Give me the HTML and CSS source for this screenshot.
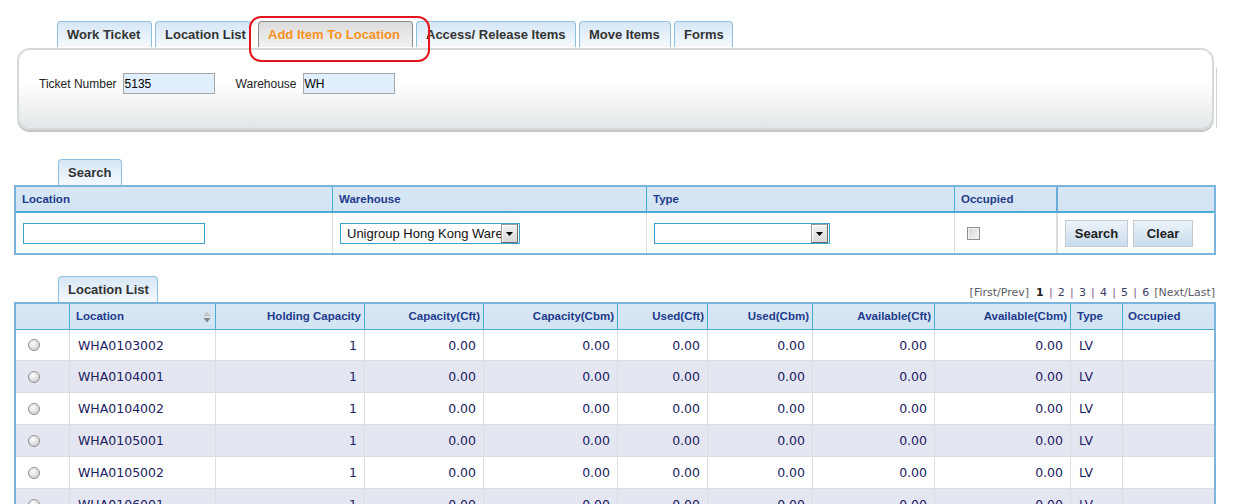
FILE: index.html
```html
<!DOCTYPE html>
<html>
<head>
<meta charset="utf-8">
<title>Add Item To Location</title>
<link rel="stylesheet" href="styles.css">
</head>
<body>
<div class="page">
  <div class="top-tabs">
    <div class="tab w-work">Work Ticket</div>
    <div class="tab w-loc">Location List</div>
    <div class="tab active w-add">Add Item To Location</div>
    <div class="tab w-acc">Access/ Release Items</div>
    <div class="tab w-move">Move Items</div>
    <div class="tab w-forms">Forms</div>
  </div>

  <div class="panel">
    <span class="fld-label">Ticket Number</span><div class="ro-input">5135</div>
    <span class="fld-label">Warehouse</span><div class="ro-input">WH</div>
  </div>

  <div class="section search-section">
    <div class="sec-tab tab-search">Search</div>
    <table class="search-table">
      <tr>
        <th class="s1">Location</th>
        <th class="s2">Warehouse</th>
        <th class="s3">Type</th>
        <th class="s4">Occupied</th>
        <th class="s5"></th>
      </tr>
      <tr>
        <td class="cell-pad"><input class="txt-input" type="text"></td>
        <td class="cell-pad"><div class="sel sel-wh"><span class="sel-text">Unigroup Hong Kong Warehouse</span><span class="sel-btn"><svg width="7" height="4" viewBox="0 0 7 4"><path d="M0 0H7L3.5 4Z" fill="#000"/></svg></span></div></td>
        <td class="cell-pad"><div class="sel sel-type"><span class="sel-text"></span><span class="sel-btn"><svg width="7" height="4" viewBox="0 0 7 4"><path d="M0 0H7L3.5 4Z" fill="#000"/></svg></span></div></td>
        <td class="cell-chk s4b"><input class="chk" type="checkbox"></td>
        <td class="cell-pad"><div class="btns"><button class="btn btn-search">Search</button><button class="btn btn-clear">Clear</button></div></td>
      </tr>
    </table>
  </div>

  <div class="section list-section">
    <div class="list-head">
      <div class="sec-tab tab-list">Location List</div>
      <div class="pager"><span class="pg-nav">[First/Prev]</span><b class="pg-cur">1</b><span class="pg-sep">|</span><span class="pg-num">2</span><span class="pg-sep">|</span><span class="pg-num">3</span><span class="pg-sep">|</span><span class="pg-num">4</span><span class="pg-sep">|</span><span class="pg-num">5</span><span class="pg-sep">|</span><span class="pg-num">6</span><span class="pg-nav pg-next">[Next/Last]</span></div>
    </div>
    <table class="grid">
      <tr>
        <th class="g1"></th>
        <th class="g2 left"><span class="sort"><svg width="8" height="12" viewBox="0 0 8 12"><path d="M0.5 5H7.5L4 0.5Z" fill="#c4c4c4"/><path d="M0.5 7H7.5L4 11.5Z" fill="#858585"/></svg></span>Location</th>
        <th class="g3">Holding Capacity</th>
        <th class="g4">Capacity(Cft)</th>
        <th class="g5">Capacity(Cbm)</th>
        <th class="g6">Used(Cft)</th>
        <th class="g7">Used(Cbm)</th>
        <th class="g8">Available(Cft)</th>
        <th class="g9">Available(Cbm)</th>
        <th class="g10 left">Type</th>
        <th class="g11 left">Occupied</th>
      </tr>
      <tr class="first">
        <td class="rad"><input class="radio" type="radio" name="loc"></td>
        <td class="left">WHA0103002</td><td>1</td><td>0.00</td><td>0.00</td><td>0.00</td><td>0.00</td><td>0.00</td><td>0.00</td><td class="left">LV</td><td class="left last"></td>
      </tr>
      <tr class="alt">
        <td class="rad"><input class="radio" type="radio" name="loc"></td>
        <td class="left">WHA0104001</td><td>1</td><td>0.00</td><td>0.00</td><td>0.00</td><td>0.00</td><td>0.00</td><td>0.00</td><td class="left">LV</td><td class="left last"></td>
      </tr>
      <tr>
        <td class="rad"><input class="radio" type="radio" name="loc"></td>
        <td class="left">WHA0104002</td><td>1</td><td>0.00</td><td>0.00</td><td>0.00</td><td>0.00</td><td>0.00</td><td>0.00</td><td class="left">LV</td><td class="left last"></td>
      </tr>
      <tr class="alt">
        <td class="rad"><input class="radio" type="radio" name="loc"></td>
        <td class="left">WHA0105001</td><td>1</td><td>0.00</td><td>0.00</td><td>0.00</td><td>0.00</td><td>0.00</td><td>0.00</td><td class="left">LV</td><td class="left last"></td>
      </tr>
      <tr>
        <td class="rad"><input class="radio" type="radio" name="loc"></td>
        <td class="left">WHA0105002</td><td>1</td><td>0.00</td><td>0.00</td><td>0.00</td><td>0.00</td><td>0.00</td><td>0.00</td><td class="left">LV</td><td class="left last"></td>
      </tr>
      <tr class="alt">
        <td class="rad"><input class="radio" type="radio" name="loc"></td>
        <td class="left">WHA0106001</td><td>1</td><td>0.00</td><td>0.00</td><td>0.00</td><td>0.00</td><td>0.00</td><td>0.00</td><td class="left">LV</td><td class="left last"></td>
      </tr>
    </table>
  </div>
</div>
<div class="annot"></div>
</body>
</html>
```

FILE: styles.css
```css
* { box-sizing: border-box; }
html, body { margin: 0; padding: 0; background: #fff; }
body {
  font-family: "Liberation Sans", Arial, sans-serif;
  color: #333;
  width: 1249px;
  height: 504px;
  overflow: hidden;
  position: relative;
}
.page { padding-top: 21px; }

/* top tabs */
.top-tabs { display: flex; gap: 3px; margin-left: 57px; height: 26px; }
.tab {
  height: 26px;
  border: 1px solid #8fc0e2;
  border-bottom: none;
  border-radius: 4px 4px 0 0;
  background: linear-gradient(#d6e7f6, #f5f9fd);
  font-weight: bold;
  font-size: 13px;
  line-height: 25px;
  padding-left: 9px;
  color: #333;
  white-space: nowrap;
  overflow: hidden;
}
.tab.active {
  border-color: #8c8c8c;
  background: linear-gradient(#dcdcdc, #f2f2f2);
  color: #f7921e;
  margin-left: 4px;
}
.w-work { width: 95px; }
.w-loc { width: 96px; }
.w-add { width: 155px; }
.w-acc { width: 160px; }
.w-move { width: 92px; }
.w-forms { width: 59px; }

.annot {
  position: absolute;
  z-index: 5;
  left: 249px;
  top: 16px;
  width: 181px;
  height: 46px;
  border: 2px solid #e3141c;
  border-radius: 12px;
}

/* info panel */
.panel {
  margin: 1px 35px 0 17px;
  height: 82px;
  border: 2px solid #d5d9d9;
  border-radius: 13px;
  background: linear-gradient(#ffffff 0%, #ffffff 42%, #e2e6e8 100%);
  display: flex;
  align-items: flex-start;
  padding: 23px 0 0 20px;
  font-size: 12px;
  position: relative;
  box-shadow: 0 2px 0 #c4c6c6;
}
.panel::after {
  content: "";
  position: absolute;
  right: -5px;
  top: 18px;
  bottom: 0;
  width: 1px;
  background: #d2d4d4;
}
.fld-label { line-height: 22px; margin-right: 6px; color: #222; }
.ro-input {
  width: 92px;
  height: 21px;
  border: 1px solid #a5a5a5;
  background: #e1eefb;
  font-size: 12px;
  line-height: 20px;
  padding-left: 1px;
  color: #000;
  margin-right: 21px;
}

/* sections */
.section { margin: 0 33px 0 14px; }
.search-section { margin-top: 29px; }
.list-section { margin-top: 21px; }
.sec-tab {
  margin-left: 44px;
  height: 26px;
  border: 1px solid #8fc0e2;
  border-bottom: none;
  border-radius: 4px 4px 0 0;
  background: linear-gradient(#d6e7f6, #f5f9fd);
  font-weight: bold;
  font-size: 13px;
  line-height: 25px;
  padding-left: 9px;
  color: #333;
  white-space: nowrap;
}
.tab-search { width: 64px; }
.tab-list { width: 100px; }

/* search table */
.search-table {
  width: 1202px;
  table-layout: fixed;
  border-collapse: separate;
  border-spacing: 0;
  border: 2px solid #7bb4dc;
}
.search-table th {
  height: 26px;
  background: linear-gradient(#d7e7f5, #d2e3f3);
  border-right: 1px solid #4aacd4;
  border-bottom: 2px solid #4aacd4;
  text-align: left;
  padding: 0 0 0 6px;
  font-size: 11.5px;
  font-weight: bold;
  color: #1f3b8b;
  line-height: 24px;
}
.search-table .s1 { width: 317px; }
.search-table .s2 { width: 314px; }
.search-table .s3 { width: 308px; }
.search-table .s4 { width: 103px; border-right: 2px solid #6aaed8; }
.search-table .s5 { width: 156px; border-right: none; }
.search-table td {
  height: 40px;
  border-right: 1px solid #dcdcdc;
  vertical-align: middle;
}
.search-table td:last-child { border-right: none; }
.search-table td.s4b { border-right: 2px solid #dcdcdc; }
.cell-pad { padding-left: 7px; }
.cell-chk { padding-left: 12px; }
.txt-input {
  display: block;
  width: 182px;
  height: 21px;
  margin: 0;
  border: 1px solid #3aa0d0;
  padding: 0 2px;
  font: 13px "Liberation Sans", Arial, sans-serif;
  background: #fff;
  outline: none;
}
.sel {
  display: flex;
  height: 21px;
  border: 1px solid #3aa0d0;
  background: #fff;
  align-items: stretch;
}
.sel-wh { width: 180px; }
.sel-type { width: 176px; }
.sel-text {
  flex: 1;
  overflow: hidden;
  white-space: nowrap;
  font-size: 13px;
  line-height: 19px;
  padding-left: 6px;
  color: #111;
}
.sel-btn {
  width: 17px;
  margin-right: 1px;
  border: 1px solid #6c6c6c;
  border-top-color: #9a9a9a;
  border-left-color: #9a9a9a;
  background: linear-gradient(#f2f2f2, #d8d8d8);
  box-shadow: inset 1px 1px 0 #ffffff;
  display: flex;
  align-items: center;
  justify-content: center;
}
.sel-btn svg { display: block; margin-top: 1px; }
.chk {
  appearance: none;
  -webkit-appearance: none;
  display: block;
  width: 13px;
  height: 13px;
  margin: 0;
  border: 1px solid #8e8e8e;
  background: linear-gradient(135deg, #d4d4d4, #f6f6f6);
  box-shadow: inset 0 0 0 1px #f2f2f2;
}
.btns { display: flex; gap: 5px; }
.btn {
  height: 27px;
  margin: 0;
  border: 1px solid #c2c9d0;
  background: linear-gradient(#eef4fa, #c7dbeb);
  font: bold 13px "Liberation Sans", Arial, sans-serif;
  color: #1c1c1c;
  padding: 0;
}
.btn-search { width: 63px; }
.btn-clear { width: 60px; }

/* list head */
.list-head { display: flex; justify-content: space-between; align-items: flex-end; }
.pager {
  font-family: "DejaVu Sans", Verdana, sans-serif;
  font-size: 11px;
  line-height: 13px;
  padding-bottom: 3px;
  margin-right: 1px;
  white-space: nowrap;
  color: #444466;
}
.pg-nav { color: #5b5b66; }
.pg-cur { color: #222; margin-left: 7px; }
.pg-sep { color: #7b5b8b; padding: 0 5.2px; }
.pg-num { color: #3b3b66; }
.pg-next { margin-left: 5px; }

/* grid */
.grid {
  width: 1202px;
  table-layout: fixed;
  border-collapse: separate;
  border-spacing: 0;
  border: 2px solid #7bb4dc;
  border-bottom: none;
}
.grid th {
  height: 26px;
  background: linear-gradient(#d7e7f5, #d2e3f3);
  border-right: 1px solid #4aacd4;
  border-bottom: 1px solid #4aacd4;
  text-align: right;
  padding: 0 3px 2px 3px;
  font-size: 11.5px;
  font-weight: bold;
  color: #1f3b8b;
  white-space: nowrap;
  overflow: hidden;
}
.grid th.left { text-align: left; padding-left: 6px; }
.grid th.g11 { padding-left: 5px; border-right: none; }
.g1 { width: 54px; }
.g2 { width: 146px; }
.g3 { width: 149px; }
.g4 { width: 119px; }
.g5 { width: 134px; }
.g6 { width: 90px; }
.g7 { width: 105px; }
.g8 { width: 122px; }
.g9 { width: 136px; }
.g10 { width: 52px; }
.g11 { width: 91px; }
.sort { float: right; height: 0; margin: 1px 1px 0 0; line-height: 0; }
.sort svg { display: block; }
.grid td {
  height: 32px;
  border-right: 1px solid #dcdcdc;
  border-bottom: 1px solid #dcdcdc;
  text-align: right;
  padding: 0 7px 0 7px;
  font-family: "DejaVu Sans", Verdana, sans-serif;
  font-size: 12.5px;
  color: #1a2060;
  white-space: nowrap;
  background: #fff;
}
.grid tr.first td { height: 31px; }
.grid td.left { text-align: left; padding-left: 8px; }
.grid td.last { border-right: none; }
.grid tr.alt td { background: #e4e6f1; }
.grid td.rad { padding: 0 0 0 12px; text-align: left; }
.radio {
  appearance: none;
  -webkit-appearance: none;
  display: block;
  width: 12px;
  height: 12px;
  margin: 0;
  border: 1px solid #8e8e8e;
  border-radius: 50%;
  background: radial-gradient(circle at 40% 35%, #ffffff 0%, #e4e4e4 45%, #c4c4c4 100%);
}
```
